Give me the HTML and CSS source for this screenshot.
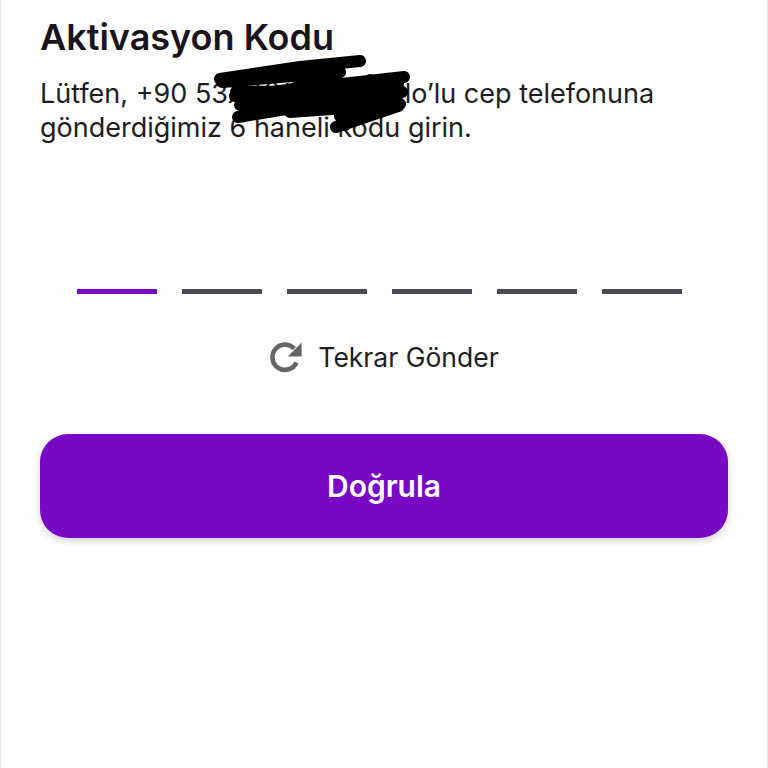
FILE: index.html
```html
<!DOCTYPE html>
<html lang="tr">
<head>
<meta charset="utf-8">
<title>Aktivasyon Kodu</title>
<link rel="stylesheet" href="styles.css">
</head>
<body>
<main class="screen">
  <h1 class="title">Aktivasyon Kodu</h1>
  <p class="desc">Lütfen, +90 53X XXX XX XXʼlo’lu cep telefonuna<br>gönderdiğimiz 6 haneli kodu girin.</p>
  <div class="otp">
    <span class="dash active"></span>
    <span class="dash"></span>
    <span class="dash"></span>
    <span class="dash"></span>
    <span class="dash"></span>
    <span class="dash"></span>
  </div>
  <div class="resend">
    <svg class="resend-icon" viewBox="0 0 34 34" aria-hidden="true">
      <path class="arc" d="M27.5 22.5A12.6 12.6 0 1 1 25.2 8.6"/>
      <path class="head" d="M32.6 2.6V16.4H18.8Z"/>
    </svg>
    <span>Tekrar Gönder</span>
  </div>
  <button class="verify">Doğrula</button>
  <svg class="scribble" viewBox="0 0 768 768" aria-hidden="true">
    <path d="M220 79 L300 67 L360 61 M222 82 L340 72 L290 90 L235 96 L404 77 M236 92 L400 90 L238 117 M240 105 L398 84 M290 112 L400 104 M335 104 L402 92 M340 116 L398 106 L336 127 M330 84 L345 125 M370 80 L385 110"/>
  </svg>
</main>
</body>
</html>
```
FILE: styles.css
```css
* {
  box-sizing: border-box;
}

html,
body {
  margin: 0;
  height: 100%;
}

body {
  background: #fff;
  font-family: Inter, "Liberation Sans", sans-serif;
}

.screen {
  position: relative;
  height: 768px;
  overflow: hidden;
  padding: 14px 39px 0;
  background: #fefefe;
  border-left: 1px solid #e6e6e8;
  border-right: 1px solid #e6e6e8;
}

.title {
  margin: 0;
  font-size: 36px;
  line-height: 46px;
  font-weight: 600;
  letter-spacing: 0;
  color: #1b1320;
}

.desc {
  margin: 17px 0 0;
  font-size: 27px;
  line-height: 34px;
  font-weight: 400;
  color: #1f1c22;
  white-space: nowrap;
}

.otp {
  display: flex;
  gap: 25px;
  margin: 144px 0 0 37px;
}

.dash {
  width: 80px;
  height: 5px;
  background: #4d4a58;
}

.dash.active {
  background: #7a0bc4;
}

.resend {
  display: flex;
  justify-content: center;
  align-items: center;
  gap: 15px;
  margin-top: 43px;
  height: 40px;
  font-size: 26.5px;
  color: #1f1c22;
}

.resend-icon {
  width: 34px;
  height: 34px;
}

.arc {
  fill: none;
  stroke: #656565;
  stroke-width: 4.6;
}

.head {
  fill: #656565;
}

.verify {
  display: block;
  width: 688px;
  height: 104px;
  margin-top: 57px;
  border: 0;
  border-radius: 28px;
  background: #7808c4;
  color: #fff;
  font-family: inherit;
  font-size: 30px;
  font-weight: 600;
  box-shadow: 0 3px 7px rgba(60, 50, 80, 0.22);
}

.scribble {
  position: absolute;
  left: -1px;
  top: 0;
  width: 768px;
  height: 768px;
  pointer-events: none;
}

.scribble path {
  fill: none;
  stroke: #000;
  stroke-width: 12;
  stroke-linecap: round;
  stroke-linejoin: round;
}
```
